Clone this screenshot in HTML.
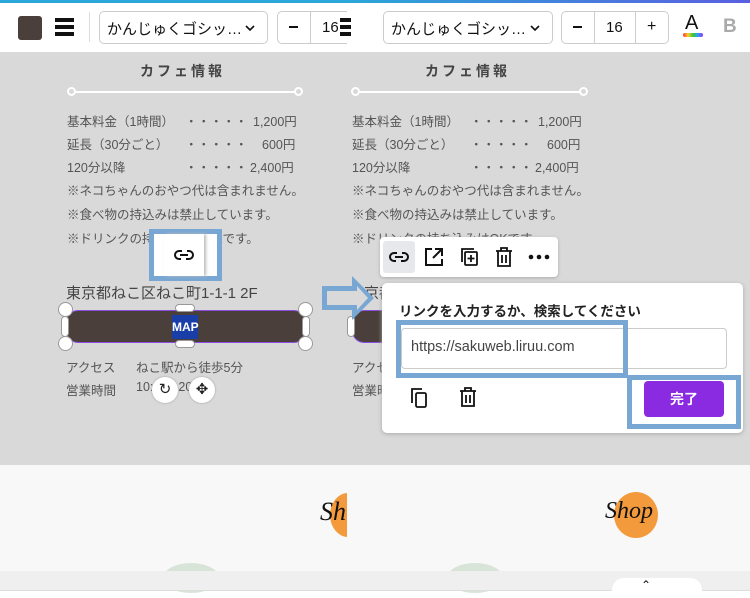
<!DOCTYPE html>
<html><head><meta charset="utf-8"><style>
*{margin:0;padding:0;box-sizing:border-box}
body{width:750px;height:598px;overflow:hidden;position:relative;background:#fff;font-family:"Liberation Sans","Noto Sans CJK JP",sans-serif;color:#555}
.a{position:absolute}
.panel{position:absolute;top:0;height:598px;overflow:hidden}
.gray{background:#d9d9d9}
.t{font-size:12.5px;color:#555;white-space:nowrap}
.box{border:1px solid #ccc;border-radius:5px;background:#fff}
.hl{border:5px solid #79a7d3}
.chev{position:absolute;right:12px;top:13px}
</style></head><body>

<!-- LEFT PANEL -->
<div class="panel" style="left:0;width:347px">
  <div class="a" style="left:0;top:0;width:347px;height:3px;background:#2aa7d8"></div>
  <div class="a" style="left:0;top:3px;width:347px;height:49px;background:#fff"></div>
  <div class="a" style="left:18px;top:16px;width:24px;height:24px;background:#4a3f3a;border-radius:3px"></div>
  <div class="a" style="left:55px;top:18px;width:19px;height:4px;background:#111"></div>
  <div class="a" style="left:55px;top:25px;width:19px;height:4px;background:#111"></div>
  <div class="a" style="left:55px;top:32px;width:19px;height:4px;background:#111"></div>
  <div class="a" style="left:89px;top:12px;width:1px;height:30px;background:#ddd"></div>
  <div class="a box" style="left:99px;top:11px;width:169px;height:33px;font-size:15px;color:#111;padding:6px 7px">かんじゅくゴシッ…<svg class="chev" width="10" height="7" viewBox="0 0 10 7" fill="none" stroke="#111" stroke-width="1.6"><path d="M1 1l4 4 4-4"/></svg></div>
  <div class="a box" style="left:277px;top:11px;width:80px;height:33px"></div>
  <div class="a" style="left:289px;top:26px;width:9px;height:2px;background:#111"></div>
  <div class="a" style="left:310px;top:12px;width:1px;height:31px;background:#ccc"></div>
  <div class="a" style="left:322px;top:19px;font-size:15px;color:#111">16</div>
  <div class="a" style="left:340px;top:18px;width:8px;height:4px;background:#111"></div>
  <div class="a" style="left:340px;top:25px;width:8px;height:4px;background:#111"></div>
  <div class="a" style="left:340px;top:32px;width:8px;height:4px;background:#111"></div>

  <div class="a gray" style="left:0;top:52px;width:347px;height:413px"></div>
  <div class="a" style="left:140px;top:61px;font-size:14px;font-weight:bold;letter-spacing:3px;color:#444">カフェ情報</div>
  <div class="a" style="left:72px;top:91px;width:226px;height:2px;background:#fff"></div>
  <div class="a" style="left:67px;top:87px;width:9px;height:9px;border:2px solid #fff;border-radius:50%;background:#d9d9d9"></div>
  <div class="a" style="left:294px;top:87px;width:9px;height:9px;border:2px solid #fff;border-radius:50%;background:#d9d9d9"></div>
  <div class="a t" style="left:67px;top:111px">基本料金（1時間）</div><div class="a t" style="left:185px;top:111px">・・・・・</div><div class="a t" style="left:253px;top:111px">1,200円</div>
  <div class="a t" style="left:67px;top:134px">延長（30分ごと）</div><div class="a t" style="left:185px;top:134px">・・・・・</div><div class="a t" style="left:262px;top:134px">600円</div>
  <div class="a t" style="left:67px;top:157px">120分以降</div><div class="a t" style="left:185px;top:157px">・・・・・</div><div class="a t" style="left:250px;top:157px">2,400円</div>
  <div class="a t" style="left:67px;top:180px">※ネコちゃんのおやつ代は含まれません。</div>
  <div class="a t" style="left:67px;top:204px">※食べ物の持込みは禁止しています。</div>
  <div class="a t" style="left:67px;top:228px">※ドリンクの持ち込みはOKです。</div>
  <div class="a hl" style="left:149px;top:229px;width:73px;height:52px;background:#fff"></div>
  <div class="a" style="left:164px;top:234px;width:40px;height:42px;background:#fff;box-shadow:2px 0 3px #bbb"></div>
  <svg class="a" style="left:173px;top:247px" width="22" height="16" viewBox="0 0 22 16" fill="none" stroke="#111" stroke-width="2"><path d="M9 4H6a4 4 0 0 0 0 8h2"/><path d="M13 12h3a4 4 0 0 0 0-8h-2"/><path d="M7 8h8"/></svg>
  <div class="a" style="left:66px;top:282px;font-size:15px;color:#444">東京都ねこ区ねこ町1-1-1 2F</div>
  <div class="a" style="left:66px;top:310px;width:240px;height:33px;background:#4a3f3a;border-radius:12px;border:1.5px solid #8a4de0"></div>
  <div class="a" style="left:172px;top:315px;width:26px;height:24px;background:#1a3ea8;color:#fff;font-size:12px;font-weight:bold;text-align:center;line-height:24px">MAP</div>
  <div class="a" style="left:58px;top:302px;width:15px;height:15px;background:#fff;border:1px solid #999;border-radius:50%"></div>
  <div class="a" style="left:298px;top:302px;width:15px;height:15px;background:#fff;border:1px solid #999;border-radius:50%"></div>
  <div class="a" style="left:58px;top:336px;width:15px;height:15px;background:#fff;border:1px solid #999;border-radius:50%"></div>
  <div class="a" style="left:298px;top:336px;width:15px;height:15px;background:#fff;border:1px solid #999;border-radius:50%"></div>
  <div class="a" style="left:61px;top:316px;width:8px;height:21px;background:#fff;border:1px solid #999;border-radius:4px"></div>
  <div class="a" style="left:302px;top:316px;width:8px;height:21px;background:#fff;border:1px solid #999;border-radius:4px"></div>
  <div class="a" style="left:175px;top:304px;width:20px;height:8px;background:#fff;border:1px solid #999;border-radius:4px"></div>
  <div class="a" style="left:175px;top:340px;width:20px;height:8px;background:#fff;border:1px solid #999;border-radius:4px"></div>
  <div class="a t" style="left:66px;top:357px">アクセス</div><div class="a t" style="left:136px;top:357px">ねこ駅から徒歩5分</div>
  <div class="a t" style="left:66px;top:380px">営業時間</div><div class="a t" style="left:136px;top:380px">10:00 - 20:00</div>
  <div class="a" style="left:152px;top:377px;width:26px;height:26px;background:#fff;border-radius:50%;box-shadow:0 0 2px #999;text-align:center;line-height:26px;font-size:15px;color:#222">↻</div>
  <div class="a" style="left:189px;top:377px;width:26px;height:26px;background:#fff;border-radius:50%;box-shadow:0 0 2px #999;text-align:center;line-height:26px;font-size:15px;color:#222">✥</div>

  <div class="a" style="left:0;top:465px;width:347px;height:107px;background:#f8f8f8"></div>
  <div class="a" style="left:330px;top:493px;width:36px;height:44px;background:#f39a3c;border-radius:50%"></div>
  <div class="a" style="left:320px;top:497px;font-family:'Liberation Serif',serif;font-style:italic;font-size:26px;color:#111">Sh</div>
  <div class="a" style="left:163px;top:563px;width:56px;height:30px;background:#d9e4d9;border-radius:50%"></div>
  <div class="a" style="left:0;top:571px;width:347px;height:20px;background:#efefef;border-bottom:1px solid #ddd"></div>
</div>

<!-- RIGHT PANEL -->
<div class="panel" style="left:347px;width:403px">
  <div class="a" style="left:0;top:0;width:403px;height:3px;background:linear-gradient(90deg,#2aa7d8,#5a5fe0)"></div>
  <div class="a" style="left:0;top:3px;width:403px;height:49px;background:#fff"></div>
  <div class="a" style="left:0;top:18px;width:4px;height:4px;background:#111"></div>
  <div class="a" style="left:0;top:25px;width:4px;height:4px;background:#111"></div>
  <div class="a" style="left:0;top:32px;width:4px;height:4px;background:#111"></div>
  <div class="a box" style="left:36px;top:11px;width:170px;height:33px;font-size:15px;color:#111;padding:6px 7px">かんじゅくゴシッ…<svg class="chev" width="10" height="7" viewBox="0 0 10 7" fill="none" stroke="#111" stroke-width="1.6"><path d="M1 1l4 4 4-4"/></svg></div>
  <div class="a box" style="left:214px;top:11px;width:108px;height:33px"></div>
  <div class="a" style="left:226px;top:26px;width:9px;height:2px;background:#111"></div>
  <div class="a" style="left:247px;top:12px;width:1px;height:31px;background:#ccc"></div>
  <div class="a" style="left:259px;top:19px;font-size:15px;color:#111">16</div>
  <div class="a" style="left:288px;top:12px;width:1px;height:31px;background:#ccc"></div>
  <div class="a" style="left:300px;top:18px;font-size:16px;color:#111">+</div>
  <div class="a" style="left:338px;top:12px;font-size:20px;color:#111">A</div>
  <div class="a" style="left:336px;top:33px;width:20px;height:4px;border-radius:2px;background:linear-gradient(90deg,#f33,#fc3,#3c3,#39f,#93f)"></div>
  <div class="a" style="left:376px;top:16px;font-size:19px;font-weight:bold;color:#aaa">B</div>

  <div class="a gray" style="left:0;top:52px;width:403px;height:413px"></div>
  <div class="a" style="left:78px;top:61px;font-size:14px;font-weight:bold;letter-spacing:3px;color:#444">カフェ情報</div>
  <div class="a" style="left:10px;top:91px;width:226px;height:2px;background:#fff"></div>
  <div class="a" style="left:4px;top:87px;width:9px;height:9px;border:2px solid #fff;border-radius:50%;background:#d9d9d9"></div>
  <div class="a" style="left:232px;top:87px;width:9px;height:9px;border:2px solid #fff;border-radius:50%;background:#d9d9d9"></div>
  <div class="a t" style="left:5px;top:111px">基本料金（1時間）</div><div class="a t" style="left:123px;top:111px">・・・・・</div><div class="a t" style="left:191px;top:111px">1,200円</div>
  <div class="a t" style="left:5px;top:134px">延長（30分ごと）</div><div class="a t" style="left:123px;top:134px">・・・・・</div><div class="a t" style="left:200px;top:134px">600円</div>
  <div class="a t" style="left:5px;top:157px">120分以降</div><div class="a t" style="left:123px;top:157px">・・・・・</div><div class="a t" style="left:188px;top:157px">2,400円</div>
  <div class="a t" style="left:5px;top:180px">※ネコちゃんのおやつ代は含まれません。</div>
  <div class="a t" style="left:5px;top:204px">※食べ物の持込みは禁止しています。</div>
  <div class="a t" style="left:5px;top:228px">※ドリンクの持ち込みはOKです。</div>

  <div class="a" style="left:33px;top:237px;width:178px;height:40px;background:#fff;border-radius:4px;box-shadow:0 1px 3px #aaa"></div>
  <div class="a" style="left:36px;top:241px;width:32px;height:32px;background:#e6e8ec;border-radius:3px"></div>
  <svg class="a" style="left:41px;top:249px" width="22" height="16" viewBox="0 0 22 16" fill="none" stroke="#111" stroke-width="2"><path d="M9 4H6a4 4 0 0 0 0 8h2"/><path d="M13 12h3a4 4 0 0 0 0-8h-2"/><path d="M7 8h8"/></svg>
  <svg class="a" style="left:76px;top:246px" width="22" height="22" viewBox="0 0 22 22" fill="none" stroke="#111" stroke-width="2"><path d="M9 3H3v16h16v-6"/><path d="M12 3h7v7M19 3l-9 9"/></svg>
  <svg class="a" style="left:111px;top:246px" width="22" height="22" viewBox="0 0 22 22" fill="none" stroke="#111" stroke-width="1.8"><path d="M4 16V3h12"/><rect x="7" y="6" width="12" height="13" rx="1"/><path d="M13 9v7M9.5 12.5h7"/></svg>
  <svg class="a" style="left:147px;top:246px" width="20" height="22" viewBox="0 0 20 22" fill="none" stroke="#111" stroke-width="1.8"><path d="M2 5h16M7 5V2h6v3M4 5v15h12V5M8 9v8M12 9v8"/></svg>
  <svg class="a" style="left:181px;top:254px" width="22" height="6" viewBox="0 0 22 6" fill="#111"><circle cx="3" cy="3" r="2.3"/><circle cx="11" cy="3" r="2.3"/><circle cx="19" cy="3" r="2.3"/></svg>

  <div class="a t" style="left:2px;top:282px;font-size:15px;color:#444">東京都</div>
  <div class="a" style="left:5px;top:310px;width:40px;height:33px;background:#4a3f3a;border-radius:12px 0 0 12px;border:1.5px solid #8a4de0"></div>
  <div class="a" style="left:0;top:316px;width:8px;height:21px;background:#fff;border:1px solid #999;border-radius:4px"></div>
  <div class="a t" style="left:5px;top:357px">アクセス</div>
  <div class="a t" style="left:5px;top:380px">営業時間</div>

  <div class="a" style="left:35px;top:283px;width:361px;height:150px;background:#fff;border-radius:5px;box-shadow:0 1px 4px #aaa"></div>
  <div class="a" style="left:52px;top:300px;font-size:13.5px;font-weight:bold;color:#222">リンクを入力するか、検索してください</div>
  <div class="a" style="left:54px;top:328px;width:326px;height:41px;border:1px solid #ccc;border-radius:4px"></div>
  <div class="a hl" style="left:49px;top:320px;width:232px;height:58px"></div>
  <div class="a" style="left:64px;top:339px;font-size:14.5px;color:#444">https://sakuweb.liruu.com</div>
  <svg class="a" style="left:62px;top:387px" width="20" height="22" viewBox="0 0 20 22" fill="none" stroke="#111" stroke-width="1.8"><path d="M3 16V2h10"/><rect x="7" y="6" width="10" height="14" rx="1.5"/></svg>
  <svg class="a" style="left:111px;top:386px" width="20" height="22" viewBox="0 0 20 22" fill="none" stroke="#111" stroke-width="1.8"><path d="M2 5h16M7 5V2h6v3M4 5v15h12V5M8 9v8M12 9v8"/></svg>
  <div class="a hl" style="left:280px;top:375px;width:114px;height:54px"></div>
  <div class="a" style="left:297px;top:381px;width:80px;height:36px;background:#8a2be2;border-radius:4px;color:#fff;font-weight:bold;font-size:14px;text-align:center;line-height:36px">完了</div>

  <div class="a" style="left:0;top:465px;width:403px;height:107px;background:#f8f8f8"></div>
  <div class="a" style="left:267px;top:492px;width:44px;height:46px;background:#f39a3c;border-radius:50%"></div>
  <div class="a" style="left:258px;top:498px;font-family:'Liberation Serif',serif;font-style:italic;font-size:24px;color:#111">Shop</div>
  <div class="a" style="left:100px;top:563px;width:56px;height:30px;background:#d9e4d9;border-radius:50%"></div>
  <div class="a" style="left:0;top:571px;width:403px;height:20px;background:#efefef;border-bottom:1px solid #ddd"></div>
  <div class="a" style="left:265px;top:578px;width:90px;height:20px;background:#fff;border-radius:12px 12px 0 0"></div>
  <div class="a" style="left:294px;top:578px;font-size:12px;color:#111">⌃</div>
</div>

<!-- arrow (spans both panels) -->
<svg class="a" style="left:320px;top:275px" width="60" height="46" viewBox="0 0 60 46"><path d="M2 11h30V1l22 22-22 22V35H2z" fill="#79a7d3"/><path d="M7 16h30v-5l11 12-11 12v-5H7z" fill="#d9d9d9"/></svg>
</body></html>
